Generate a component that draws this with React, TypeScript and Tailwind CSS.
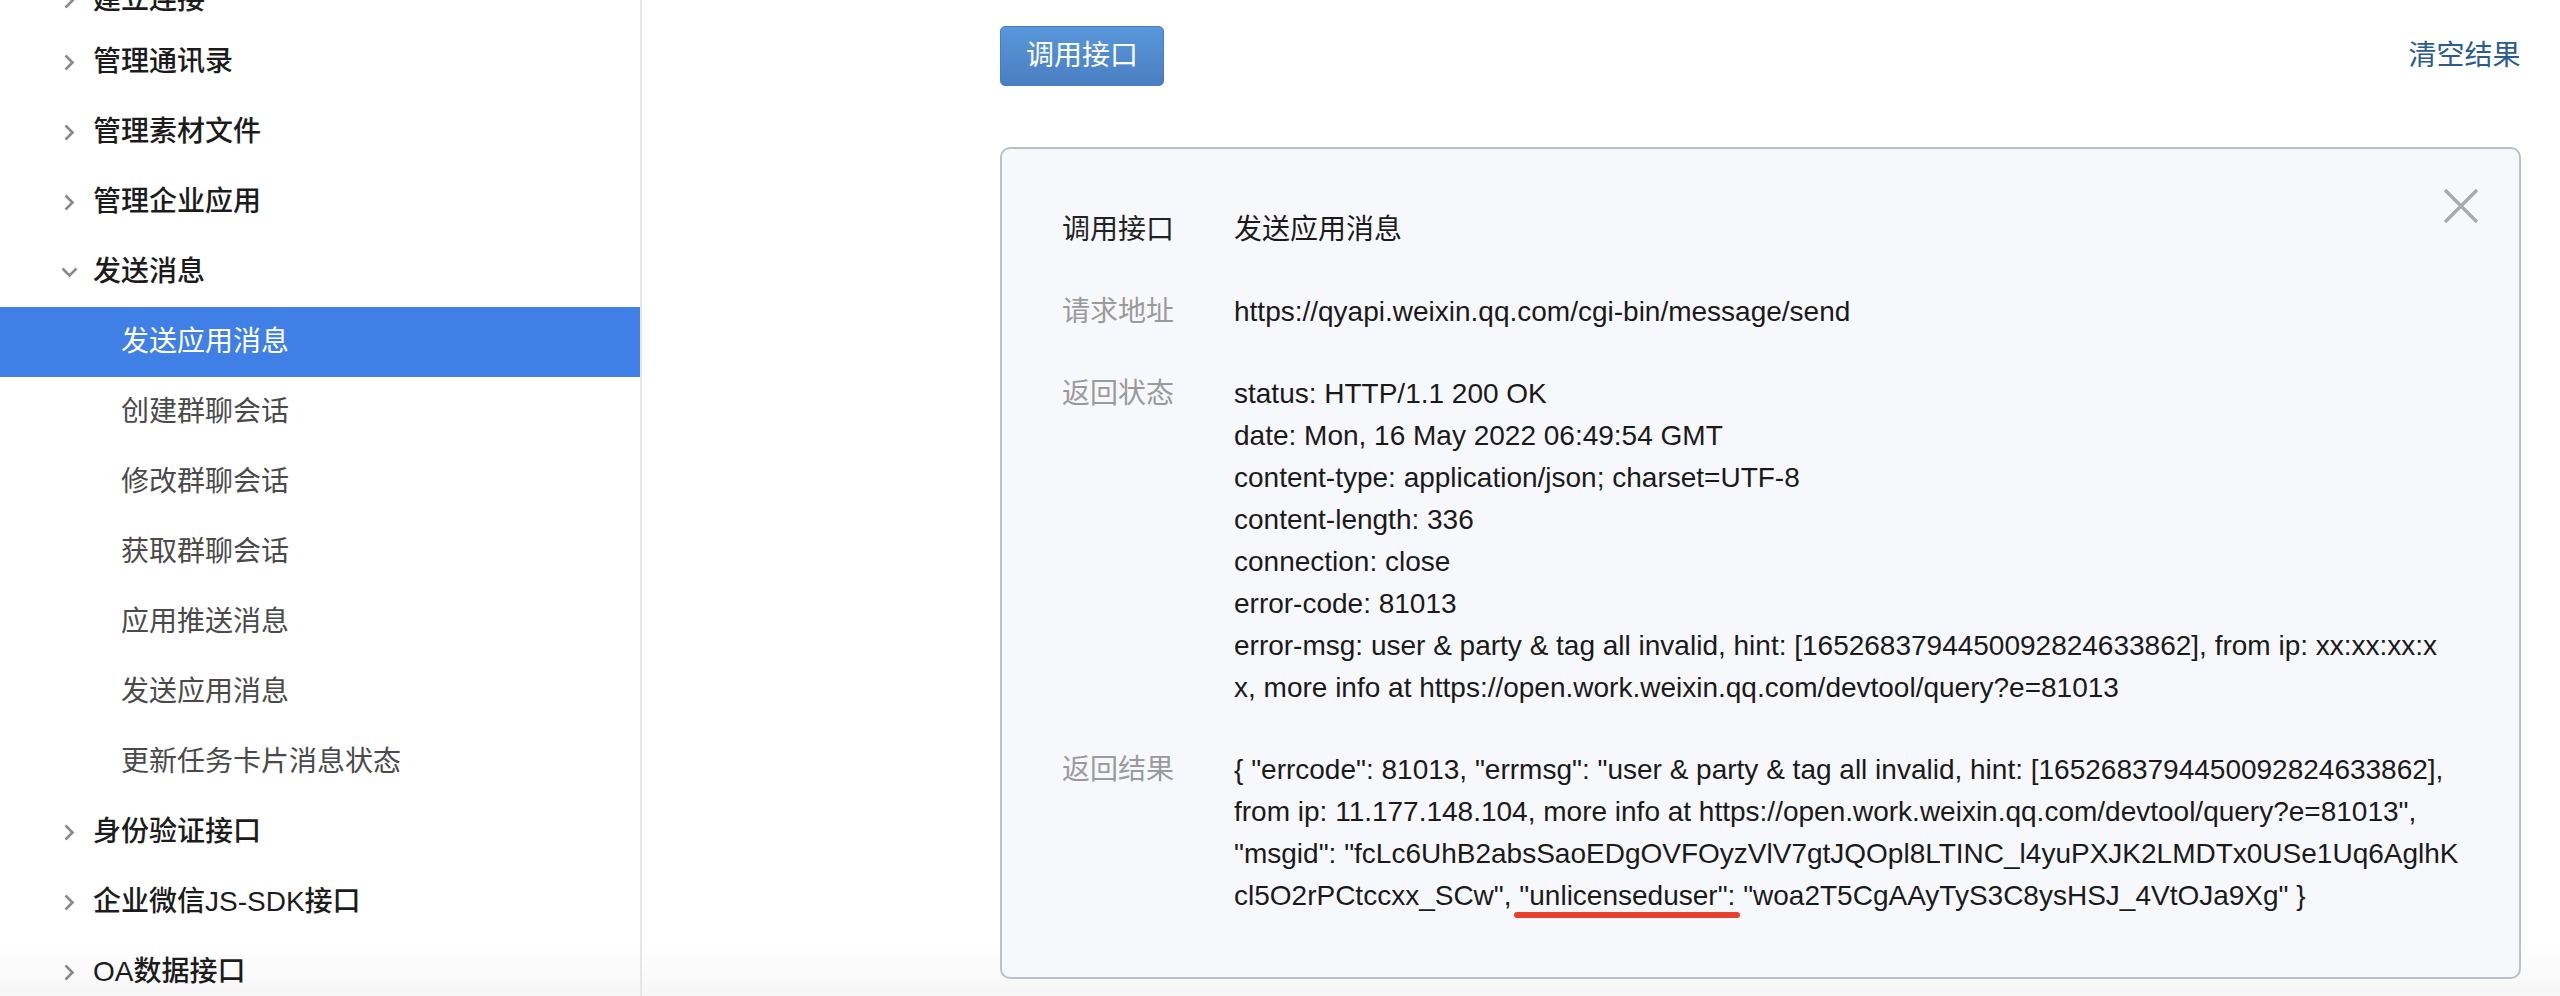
import { ReactNode } from "react";

type NavItem = {
  label: string;
  level: 0 | 1;
  open?: boolean;
  active?: boolean;
};

const navItems: NavItem[] = [
  { label: "管理通讯录", level: 0 },
  { label: "管理素材文件", level: 0 },
  { label: "管理企业应用", level: 0 },
  { label: "发送消息", level: 0, open: true },
  { label: "发送应用消息", level: 1, active: true },
  { label: "创建群聊会话", level: 1 },
  { label: "修改群聊会话", level: 1 },
  { label: "获取群聊会话", level: 1 },
  { label: "应用推送消息", level: 1 },
  { label: "发送应用消息", level: 1 },
  { label: "更新任务卡片消息状态", level: 1 },
  { label: "身份验证接口", level: 0 },
  { label: "企业微信JS-SDK接口", level: 0 },
  { label: "OA数据接口", level: 0 },
];

const statusLines = [
  "status: HTTP/1.1 200 OK",
  "date: Mon, 16 May 2022 06:49:54 GMT",
  "content-type: application/json; charset=UTF-8",
  "content-length: 336",
  "connection: close",
  "error-code: 81013",
  "error-msg: user & party & tag all invalid, hint: [1652683794450092824633862], from ip: xx:xx:xx:x",
  "x, more info at https://open.work.weixin.qq.com/devtool/query?e=81013",
];

function Chevron({ open }: { open?: boolean }) {
  if (open) {
    return (
      <svg width="17" height="10" viewBox="0 0 17 10" className="-ml-[3px]">
        <polyline points="1.5,1.5 8.5,8.5 15.5,1.5" fill="none" stroke="#8a8a8a" strokeWidth="2.6" />
      </svg>
    );
  }
  return (
    <svg width="11" height="17" viewBox="0 0 11 17">
      <polyline points="1.5,1.5 8.5,8.5 1.5,15.5" fill="none" stroke="#8a8a8a" strokeWidth="2.6" />
    </svg>
  );
}

function Sidebar() {
  return (
    <aside className="w-[642px] shrink-0 border-r-2 border-[#e6e6e8] overflow-hidden">
      {/* partially scrolled-off item */}
      <div className="-mt-[27px] flex h-[54px] items-center pl-[64px] text-[28px] font-medium text-[#1c1c1c]">
        <span className="w-[29px]">
          <Chevron />
        </span>
        建立连接
      </div>
      {navItems.map((item, i) =>
        item.level === 0 ? (
          <div
            key={i}
            className="flex h-[70px] items-center pl-[64px] text-[28px] font-medium text-[#1c1c1c]"
          >
            <span className="flex w-[29px] items-center">
              <Chevron open={item.open} />
            </span>
            {item.label}
          </div>
        ) : (
          <div
            key={i}
            className={
              item.active
                ? "flex h-[70px] items-center bg-[#3f7fe6] pl-[121px] text-[28px] text-white"
                : "flex h-[70px] items-center pl-[121px] text-[28px] text-[#4a4a4a]"
            }
          >
            {item.label}
          </div>
        )
      )}
    </aside>
  );
}

function Row({ label, dark, children }: { label: string; dark?: boolean; children: ReactNode }) {
  return (
    <>
      <div className={dark ? "text-[#222]" : "text-[#9a9a9a]"}>{label}</div>
      <div className="text-[#1a1a1a]">{children}</div>
    </>
  );
}

function ResultCard() {
  return (
    <div className="relative mt-[61px] rounded-[10px] border-2 border-[#bac1ca] bg-[#f7f8fb] p-[60px]">
      <button className="absolute right-[40px] top-[39px]" aria-label="关闭">
        <svg width="36" height="36" viewBox="0 0 36 36">
          <path d="M2 2 L34 34 M34 2 L2 34" stroke="#a9a9a9" strokeWidth="3.2" />
        </svg>
      </button>

      <div className="grid grid-cols-[172px_1fr] gap-y-[40px] text-[28px] leading-[42px]">
        <Row label="调用接口" dark>
          发送应用消息
        </Row>
        <Row label="请求地址">https://qyapi.weixin.qq.com/cgi-bin/message/send</Row>
        <Row label="返回状态">
          {statusLines.map((line, i) => (
            <div key={i} className="whitespace-nowrap">
              {line}
            </div>
          ))}
        </Row>
        <Row label="返回结果">
          <div className="whitespace-nowrap">
            {'{ "errcode": 81013, "errmsg": "user & party & tag all invalid, hint: [1652683794450092824633862],'}
          </div>
          <div className="whitespace-nowrap">
            {'from ip: 11.177.148.104, more info at https://open.work.weixin.qq.com/devtool/query?e=81013",'}
          </div>
          <div className="whitespace-nowrap">
            {'"msgid": "fcLc6UhB2absSaoEDgOVFOyzVlV7gtJQOpl8LTINC_l4yuPXJK2LMDTx0USe1Uq6AglhK'}
          </div>
          <div className="whitespace-nowrap">
            {'cl5O2rPCtccxx_SCw", '}
            <span className="relative">
              {'"unlicenseduser"'}
              <span className="absolute -left-[5px] -right-[12px] -bottom-[7px] h-[6px] rounded-full bg-[#e8402c]" />
            </span>
            {': "woa2T5CgAAyTyS3C8ysHSJ_4VtOJa9Xg" }'}
          </div>
        </Row>
      </div>
    </div>
  );
}

export default function App() {
  return (
    <div className="flex h-[996px] w-[2560px] overflow-hidden bg-linear-to-b from-white from-[95%] to-[#f6f6f6] font-['Liberation_Sans','Noto_Sans_CJK_SC',sans-serif]">
      <Sidebar />

      <main className="flex-1 pl-[358px] pr-[41px] pt-[26px]">
        {/* Toolbar */}
        <div className="flex items-center justify-between">
          <button className="h-[60px] w-[164px] rounded-[5px] border border-[#4a7cbf] bg-linear-to-b from-[#5897db] to-[#4a7fc1] text-[28px] text-white">
            调用接口
          </button>
          <span className="text-[28px] text-[#2b5b8f]">清空结果</span>
        </div>

        <ResultCard />
      </main>
    </div>
  );
}
